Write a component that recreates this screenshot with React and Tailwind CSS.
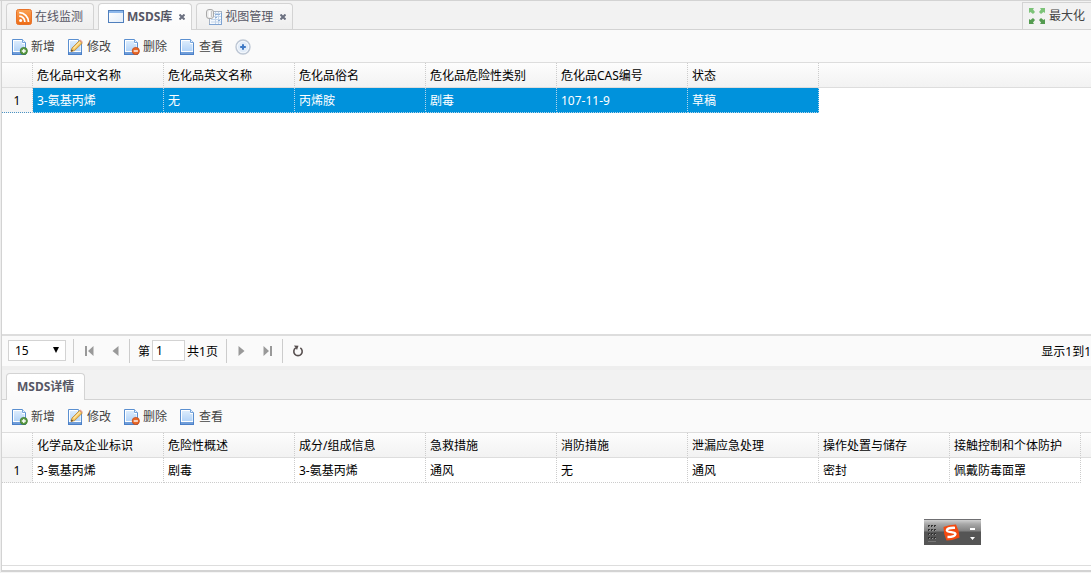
import React from "react";

function RssIcon() {
  return (
    <svg width="16" height="16" viewBox="0 0 16 16" className="shrink-0" aria-hidden="true">
      <defs>
        <linearGradient id="rss" x1="0" y1="0" x2="0" y2="1">
          <stop offset="0" stopColor="#fba253" />
          <stop offset="1" stopColor="#ee6c16" />
        </linearGradient>
      </defs>
      <rect x="0.5" y="0.5" width="15" height="15" rx="2" fill="url(#rss)" stroke="#e8732a" />
      <circle cx="4.6" cy="11.5" r="1.5" fill="#fff" />
      <path d="M3.2 7.2a5.7 5.7 0 0 1 5.7 5.7M3.2 3.6a9.3 9.3 0 0 1 9.3 9.3" fill="none" stroke="#fff" strokeWidth="1.8" />
    </svg>
  );
}

function WindowIcon() {
  return (
    <svg width="16" height="16" viewBox="0 0 16 16" className="shrink-0" aria-hidden="true">
      <defs>
        <linearGradient id="win" x1="0" y1="0" x2="1" y2="1">
          <stop offset="0" stopColor="#ffffff" />
          <stop offset="1" stopColor="#e3edf9" />
        </linearGradient>
      </defs>
      <rect x="0.5" y="1.5" width="15" height="12" fill="url(#win)" stroke="#4f7fbd" />
      <path d="M1 2h14v2H1z" fill="#8db8ec" />
    </svg>
  );
}

function ViewIcon() {
  return (
    <svg width="16" height="16" viewBox="0 0 16 16" className="shrink-0" aria-hidden="true">
      <rect x="3.5" y="2.5" width="12" height="13" fill="#f5f9fe" stroke="#a8b4c4" />
      <path d="M5 4.500h10M5 7.500h10M5 10.500h10M5 13h10M9.500 3v12M12.500 3v12" stroke="#c3d5ea" fill="none" />
      <path d="M9 5.500h5M9 8.500h2M12 11.500h2" stroke="#8fb0d8" fill="none" />
      <path d="M3 15.500h12.500V4" stroke="#7ea3d2" fill="none" />
      <rect x="0.5" y="0.5" width="7" height="9" rx="2.500" fill="#ececec" stroke="#a9a9a9" />
      <path d="M3.500 2v6" stroke="#fff" strokeWidth="1.500" />
      <path d="M5.500 2v6" stroke="#c4c4c4" />
    </svg>
  );
}

function PageIcon({ badge }) {
  return (
    <svg width="16" height="16" viewBox="0 0 16 16" className="shrink-0" aria-hidden="true">
      <defs>
        <linearGradient id="sheet" x1="0" y1="0" x2="0" y2="1">
          <stop offset="0" stopColor="#dcecfc" />
          <stop offset="1" stopColor="#b4d4f8" />
        </linearGradient>
      </defs>
      <path d="M0.500 0.500h10l3 3v12h-13z" fill="#fff" stroke="#5a8fd0" />
      <path d="M2 2h8v3h2.500v7H2z" fill="url(#sheet)" />
      <path d="M10.500 0.500v3h3" fill="#eef6ff" stroke="#78a6dc" />
      <path d="M0 13h14v3H0z" fill="#4b80c8" />
      <path d="M1 14h12" stroke="#a9cbf4" strokeWidth="0.8" />
      {badge === "add" && (
        <g>
          <circle cx="11.800" cy="12" r="3.600" fill="#5c9c45" stroke="#3c7a2b" strokeWidth="0.8" />
          <path d="M9.800 12h4M11.800 10v4" stroke="#fff" strokeWidth="1.300" />
        </g>
      )}
      {badge === "remove" && (
        <g>
          <circle cx="11.800" cy="12" r="3.600" fill="#e8692a" stroke="#c9480f" strokeWidth="0.8" />
          <path d="M9.700 12h4.200" stroke="#fff" strokeWidth="1.400" />
        </g>
      )}
      {badge === "edit" && (
        <g>
          <path d="M3 12.500l1-3.500 7.500-7.500 2.800 2.600-7.800 7.500z" fill="#f4c25a" stroke="#b98532" strokeWidth="0.8" />
          <path d="M5.500 9.500l6.500-6.500" stroke="#fde7a8" strokeWidth="1.200" />
          <path d="M11.500 1.500l1-1 2.300 2.400-.8 1z" fill="#e79f8b" />
          <path d="M3 12.500l.6-2 1.500 1.400z" fill="#4a3a28" />
        </g>
      )}
    </svg>
  );
}

function PlusIcon() {
  return (
    <svg width="16" height="16" viewBox="0 0 16 16" aria-hidden="true">
      <circle cx="8" cy="8" r="7" fill="#f3f7fc" stroke="#bcc6d4" strokeWidth="1.400" />
      <circle cx="8" cy="8" r="5.200" fill="#e2ecf8" />
      <path d="M5.200 8h5.600M8 5.200v5.600" stroke="#3f78c4" strokeWidth="2" />
    </svg>
  );
}

function ExpandIcon() {
  return (
    <svg width="16" height="16" viewBox="0 0 16 16" className="shrink-0" aria-hidden="true">
      <g fill="#7cc378">
        <path d="M0 0h5l-1 1.500L6 4 4 6 1.500 4 0 5z" />
        <path d="M16 0h-5l1 1.500L10 4l2 2 2.500-2L16 5z" />
      </g>
      <g fill="#549b50">
        <path d="M0 16h5l-1-1.500L6 12l-2-2-2.500 2L0 11z" />
        <path d="M16 16h-5l1-1.500L10 12l2-2 2.500 2L16 11z" />
      </g>
    </svg>
  );
}

function CloseMark() {
  return (
    <svg width="6" height="6" viewBox="0 0 6 6" aria-hidden="true">
      <path d="M0.500 0.500l5 5M5.500 0.500l-5 5" stroke="#6b7080" strokeWidth="2" />
    </svg>
  );
}

function Tab({ icon, label, active, closable }) {
  const look = active
    ? "-mb-px h-[27px] bg-gradient-to-b from-white to-[#fafafa] font-bold text-[#575765]"
    : "h-[26px] border-b-0 bg-gradient-to-b from-[#f8f8f8] to-[#eeeeee] text-[#575765]";
  return (
    <div className={"flex items-center rounded-t border border-b-0 border-[#d3d3d3] pl-[10px] " + look + (closable ? " pr-[6px]" : " pr-[10px]")}>
      <button type="button" role="tab" aria-selected={active} className="flex items-center gap-[3px] whitespace-nowrap">
        {icon && <span className="-ml-px">{icon}</span>}
        <span>{label}</span>
      </button>
      {closable && (
        <button type="button" aria-label="关闭" className="ml-[7px] flex h-4 w-[6px] items-center">
          <CloseMark />
        </button>
      )}
    </div>
  );
}

function ToolButton({ badge, label }) {
  return (
    <button type="button" className="flex items-center gap-[3px] whitespace-nowrap text-[#444]">
      <PageIcon badge={badge} />
      <span>{label}</span>
    </button>
  );
}

function Toolbar({ extra }) {
  return (
    <div className="flex h-[33px] shrink-0 items-center gap-[13px] border-b border-[#dddddd] bg-[#fafafa] pt-px pl-[10px]">
      <ToolButton badge="add" label="新增" />
      <ToolButton badge="edit" label="修改" />
      <ToolButton badge="remove" label="删除" />
      <ToolButton label="查看" />
      {extra && (
        <button type="button" aria-label="更多" className="-ml-px">
          <PlusIcon />
        </button>
      )}
    </div>
  );
}

function Grid({ columns, row, selected }) {
  const cell = selected
    ? "border-[#b5d5ea] bg-[#0092dc] text-white"
    : "border-[#cccccc] text-black";
  return (
    <div className="shrink-0 bg-[linear-gradient(to_bottom,#fdfdfd_0,#f2f2f2_24px,#dddddd_24px,#dddddd_25px,#ffffff_25px)]">
      <table className="table-fixed border-separate border-spacing-0 text-left whitespace-nowrap">
        <colgroup>
          <col className="w-[31px]" />
          {columns.map((c) => (
            <col key={c} className="w-[131px]" />
          ))}
        </colgroup>
        <thead>
          <tr>
            <td className="h-[25px] border-r border-b border-r-[#cccccc] border-b-[#dddddd] p-0 [border-right-style:dotted]" />
            {columns.map((c) => (
              <th
                key={c}
                scope="col"
                className="h-[25px] border-r border-b border-r-[#cccccc] border-b-[#dddddd] pt-[2px] pr-0 pb-0 pl-1 font-normal text-black [border-right-style:dotted]"
              >
                {c}
              </th>
            ))}
          </tr>
        </thead>
        <tbody>
          <tr>
            <th
              scope="row"
              className={
                "h-[25px] border-r border-b border-dotted bg-[#f5f5f5] px-0 pt-[2px] pb-0 text-center font-normal text-black " +
                (selected ? "border-r-[#cccccc] border-b-[#4b93c4]" : "border-[#cccccc]")
              }
            >
              1
            </th>
            {row.map((v, i) => (
              <td key={i} className={"h-[25px] border-r border-b border-dotted pt-[2px] pr-0 pb-0 pl-1 " + cell}>
                {v}
              </td>
            ))}
          </tr>
        </tbody>
      </table>
    </div>
  );
}

function Separator() {
  return <span className="h-6 w-px shrink-0 bg-[#cccccc]" />;
}

function PagerButton({ label, children }) {
  return (
    <button type="button" aria-label={label} className="flex h-6 w-[26px] shrink-0 items-center justify-center">
      {children}
    </button>
  );
}

function Pager() {
  return (
    <div className="flex h-8 shrink-0 items-center border-t-2 border-[#dddddd] bg-[#fafafa] pl-[6px] text-black">
      <div className="relative h-[22px] w-[58px] shrink-0">
        <select
          aria-label="每页条数"
          defaultValue="15"
          className="h-[21px] w-full appearance-none rounded-none border border-[#d3d3d3] bg-white pl-[6px] leading-[19px] outline-none"
        >
          <option>15</option>
          <option>30</option>
          <option>50</option>
        </select>
        <svg width="6" height="6" viewBox="0 0 6 6" className="pointer-events-none absolute top-[7px] right-[7px]" aria-hidden="true">
          <path d="M0 0h6L3 6z" fill="#000" />
        </svg>
      </div>
      <div className="ml-[7px] flex items-center">
        <Separator />
        <div className="flex pr-px pl-[2px]">
          <PagerButton label="首页">
            <svg width="9" height="10" viewBox="0 0 9 10" aria-hidden="true">
              <path d="M0 0h2v10H0zM8.500 0v10L3 5z" fill="#999" />
            </svg>
          </PagerButton>
          <PagerButton label="上一页">
            <svg width="7" height="10" viewBox="0 0 7 10" aria-hidden="true">
              <path d="M6.500 0v10L0.500 5z" fill="#999" />
            </svg>
          </PagerButton>
        </div>
        <Separator />
        <label className="ml-2 flex items-center gap-[2px] whitespace-nowrap">
          <span className="pt-px">第</span>
          <input
            type="text"
            defaultValue="1"
            className="mb-px h-[21px] w-[33px] border border-[#d3d3d3] bg-white pl-[3px] outline-none"
          />
        </label>
        <span className="mr-2 ml-[2px] pt-px whitespace-nowrap">共1页</span>
        <Separator />
        <div className="flex pr-px pl-[2px]">
          <PagerButton label="下一页">
            <svg width="7" height="10" viewBox="0 0 7 10" aria-hidden="true">
              <path d="M0.500 0v10l6-5z" fill="#999" />
            </svg>
          </PagerButton>
          <PagerButton label="末页">
            <svg width="9" height="10" viewBox="0 0 9 10" aria-hidden="true">
              <path d="M7 0h2v10H7zM0.500 0v10L6 5z" fill="#999" />
            </svg>
          </PagerButton>
        </div>
        <Separator />
        <div className="pl-[2px]">
          <PagerButton label="刷新">
            <svg width="12" height="12" viewBox="0 0 12 12" aria-hidden="true">
              <path d="M3.700 2.900a4.200 4.200 0 1 0 4.600 0" fill="none" stroke="#574f4f" strokeWidth="1.600" />
              <path d="M2 0.500l4.500 0.300L5 5z" fill="#574f4f" />
            </svg>
          </PagerButton>
        </div>
      </div>
      <div className="ml-auto shrink-0 pt-px whitespace-nowrap">显示1到1</div>
    </div>
  );
}

function InputMethodBar() {
  const rows = [3, 7, 11, 15];
  const cols = [0, 3, 6];
  return (
    <div className="absolute right-[110px] bottom-7 flex h-[26px] w-[57px] items-center border-t border-[#6f6f72] bg-[linear-gradient(to_bottom,#d0d0d0_0,#a8a8a8_4px,#808080_11px,#555555_12px,#555555_100%)] pl-1">
      <svg width="50" height="22" viewBox="0 0 50 22" aria-hidden="true">
        {rows.map((y) =>
          cols.map((x) => (
            <g key={x + "-" + y}>
              <rect x={x} y={y} width="2" height="2" fill="#333" />
              <rect x={x + 1} y={y + 1} width="1" height="1" fill="#999" />
            </g>
          ))
        )}
        <rect x="0" y="19" width="8" height="1" fill="#777" />
        <path d="M15.500 5Q21 2.500 28 2.500Q31.500 9 31.500 15.500Q25 18.500 18.500 18.500Q15.500 12 15.500 5Z" fill="#f4490f" />
        <path d="M27 5.800Q19.500 5.500 18.800 8.200C18.800 11 27.500 9.200 27.500 12C27 14.800 22.500 15 19.500 15" fill="none" stroke="#fff" strokeWidth="2.300" />
        <path d="M42 6h5v2h-5zM42 15h5l-2.500 3z" fill="#fff" />
      </svg>
    </div>
  );
}

export default function App() {
  return (
    <div
      className="relative flex h-screen flex-col overflow-hidden border-t border-[#d3d3d3] bg-[#eeeeee] pl-px text-[12px] leading-4"
      style={{ fontFamily: '"Noto Sans", "Noto Sans CJK SC", sans-serif' }}
    >
      <main className="flex min-h-0 flex-1 flex-col border-b-2 border-l border-b-[#d3d3d3] border-l-[#d3d3d3] bg-white">
        <header className="flex h-[29px] shrink-0 items-end border-b border-[#d3d3d3] bg-[#f2f2f2]">
          <div role="tablist" className="flex items-end gap-1 pl-1">
            <Tab icon={<RssIcon />} label="在线监测" active={false} />
            <Tab icon={<WindowIcon />} label="MSDS库" active closable />
            <Tab icon={<ViewIcon />} label="视图管理" active={false} closable />
          </div>
          <button
            type="button"
            className="ml-auto flex h-[27px] shrink-0 items-center gap-1 border-t border-l border-[#d3d3d3] pr-[6px] pl-[6px] whitespace-nowrap text-[#444]"
          >
            <ExpandIcon />
            <span>最大化</span>
          </button>
        </header>
        <Toolbar extra />
        <Grid
          selected
          columns={["危化品中文名称", "危化品英文名称", "危化品俗名", "危化品危险性类别", "危化品CAS编号", "状态"]}
          row={["3-氨基丙烯", "无", "丙烯胺", "剧毒", "107-11-9", "草稿"]}
        />
        <div className="min-h-0 flex-1" />
        <Pager />
        <section className="flex shrink-0 flex-col">
          <div className="flex h-[34px] items-end border-t-4 border-b border-t-[#eeeeee] border-b-[#d3d3d3] bg-[#f2f2f2] pl-1">
            <Tab label="MSDS详情" active />
          </div>
          <Toolbar />
          <Grid
            columns={["化学品及企业标识", "危险性概述", "成分/组成信息", "急救措施", "消防措施", "泄漏应急处理", "操作处置与储存", "接触控制和个体防护"]}
            row={["3-氨基丙烯", "剧毒", "3-氨基丙烯", "通风", "无", "通风", "密封", "佩戴防毒面罩"]}
          />
          <div className="h-[82px]" />
          <div className="h-[5px] border-t border-[#dddddd]" />
        </section>
      </main>
      <footer className="h-px shrink-0 bg-[#f5f5f5]" />
      <InputMethodBar />
    </div>
  );
}
